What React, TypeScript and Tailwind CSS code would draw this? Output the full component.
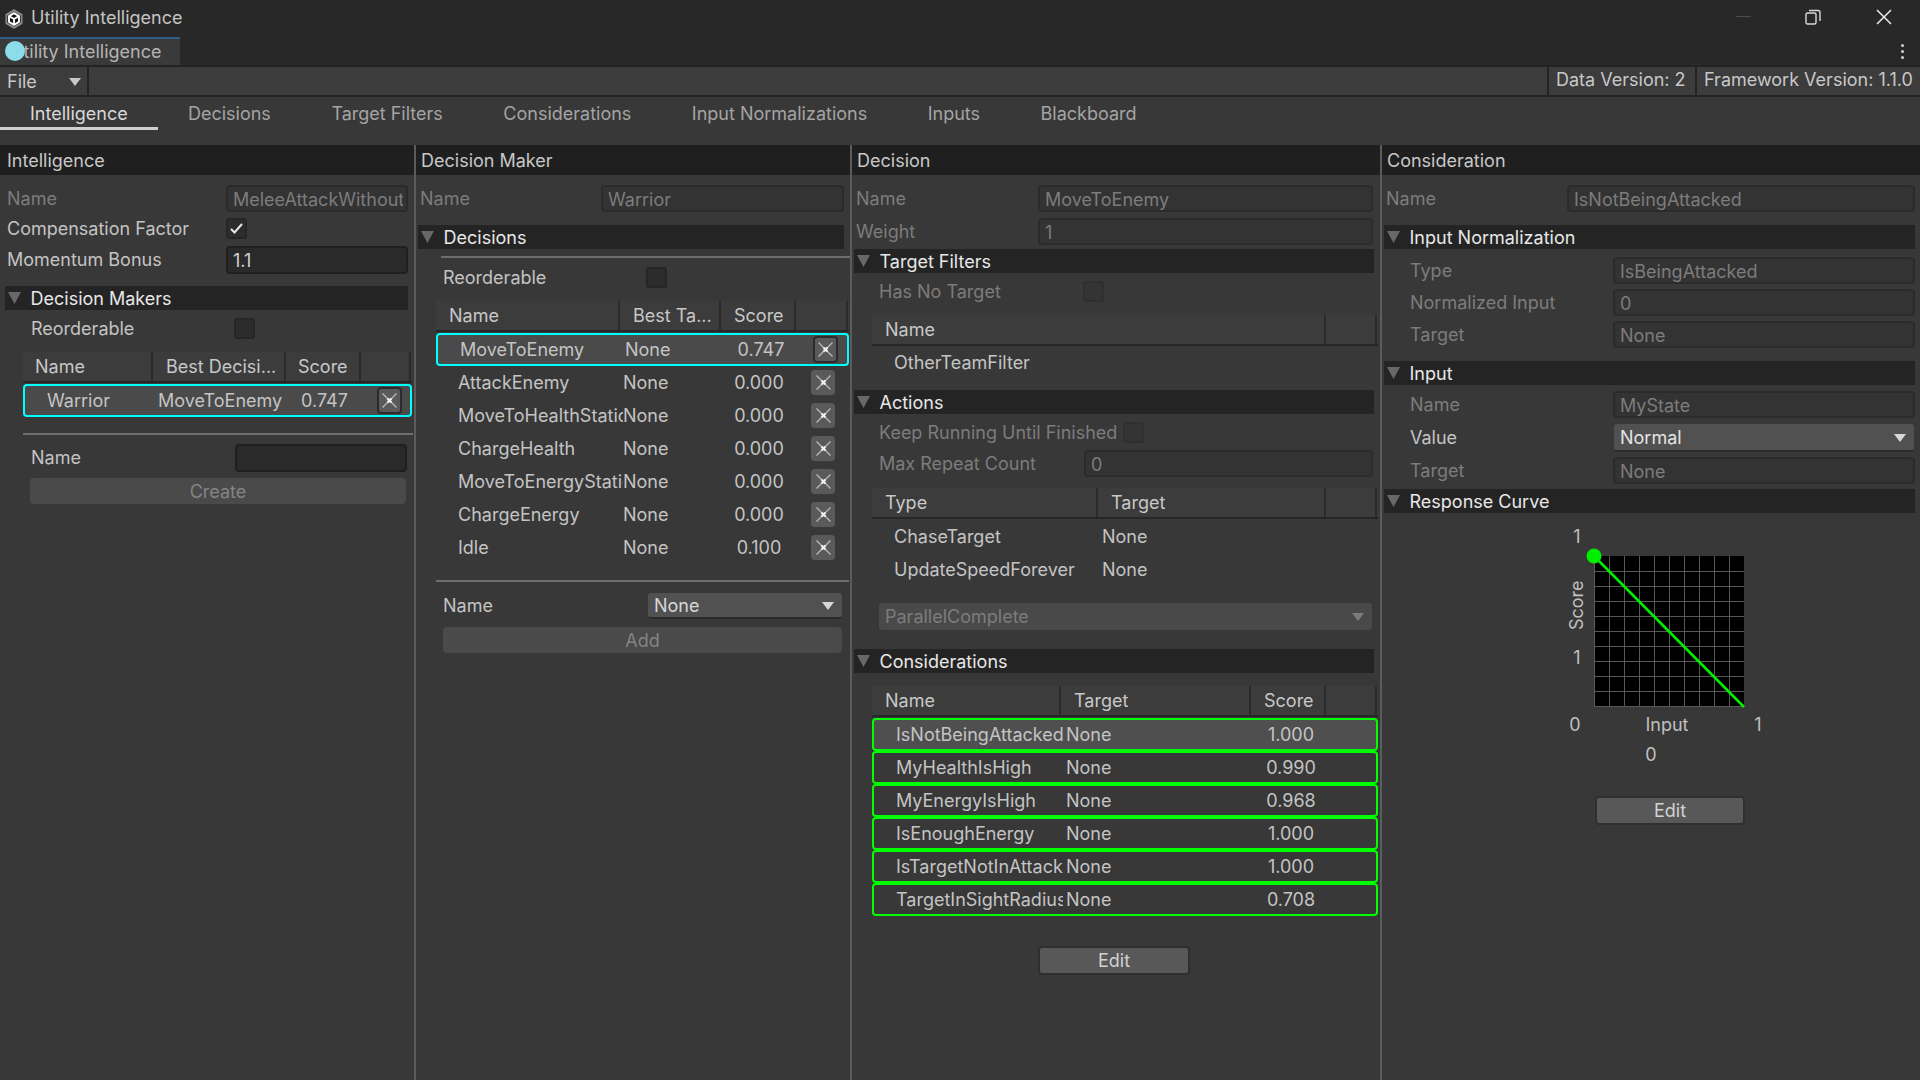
import type { ReactNode } from 'react';

const DECISIONS = [
  { name: 'AttackEnemy', score: '0.000' },
  { name: 'MoveToHealthStation', score: '0.000' },
  { name: 'ChargeHealth', score: '0.000' },
  { name: 'MoveToEnergyStation', score: '0.000' },
  { name: 'ChargeEnergy', score: '0.000' },
  { name: 'Idle', score: '0.100' },
];

const CONSIDERATIONS = [
  { name: 'IsNotBeingAttacked', score: '1.000' },
  { name: 'MyHealthIsHigh', score: '0.990' },
  { name: 'MyEnergyIsHigh', score: '0.968' },
  { name: 'IsEnoughEnergy', score: '1.000' },
  { name: 'IsTargetNotInAttackRange', score: '1.000' },
  { name: 'TargetInSightRadius', score: '0.708' },
];

const TABS = ['Decisions', 'Target Filters', 'Considerations', 'Input Normalizations', 'Inputs', 'Blackboard'];

function UnityLogo() {
  return (
    <svg width="20" height="20" viewBox="0 0 24 24" className="shrink-0">
      <path d="M12 1 L21.5 6.5 V17.5 L12 23 L2.5 17.5 V6.5 Z" fill="#8a8a8a" stroke="#8a8a8a" strokeWidth="1.5" strokeLinejoin="round" />
      <path d="M12 3 L20 7.7 V16.3 L12 21 L4 16.3 V7.7 Z" fill="#111" />
      <path d="M12 5 L18 8.5 V15.5 L12 19 L6 15.5 V8.5 Z M6 8.5 L12 12 L18 8.5 M12 12 V19" fill="none" stroke="#ffffff" strokeWidth="2.3" strokeLinejoin="round" />
    </svg>
  );
}

function Caret({ className = 'fill-[#c8c8c8]' }: { className?: string }) {
  return (
    <svg width="12" height="8" viewBox="0 0 12 8" className={className}>
      <path d="M0 0 H12 L6 8 Z" />
    </svg>
  );
}

function PanelHeader({ title, className }: { title: string; className: string }) {
  return <div className={`h-[30px] bg-[#1f1f1f] flex items-center pt-[1px] text-[#c8c8c8] ${className}`}>{title}</div>;
}

function Section({ title, className }: { title: string; className: string }) {
  return (
    <div className={`h-[24px] bg-[#242424] flex items-center text-[#e8e8e8] ${className}`}>
      <svg width="13" height="12" viewBox="0 0 13 12" className="ml-[3px] mr-[9.5px] shrink-0 fill-[#686868]">
        <path d="M0 0 H13 L6.5 12 Z" />
      </svg>
      <span className="pt-[1px]">{title}</span>
    </div>
  );
}

function Field({ value, active, className }: { value?: string; active?: boolean; className: string }) {
  const tone = active
    ? 'bg-[#2a2a2a] border-[#1f1f1f] text-[#d2d2d2]'
    : 'bg-[#333333] border-[#2b2b2b] text-[#7c7c7c]';
  return (
    <div className={`border-2 rounded-[4px] flex items-center pl-[5px] pr-[3px] ${tone} ${className}`}>
      <div className="w-full h-full flex items-center pt-[2px] overflow-hidden whitespace-nowrap">{value}</div>
    </div>
  );
}

function Check({ checked, dim }: { checked?: boolean; dim?: boolean }) {
  const tone = dim ? 'bg-[#343434] border-[#2f2f2f]' : 'bg-[#2c2c2c] border-[#262626]';
  return (
    <div className={`w-[21px] h-[21px] shrink-0 border-2 rounded-[3px] flex items-center justify-center ${tone}`}>
      {checked && (
        <svg width="13" height="11" viewBox="0 0 13 11" fill="none" stroke="#e8e8e8" strokeWidth="2">
          <path d="M1 6 L4.5 9.5 L12 1" />
        </svg>
      )}
    </div>
  );
}

function Label({ children, dim, className }: { children: ReactNode; dim?: boolean; className: string }) {
  return <div className={`shrink-0 whitespace-nowrap ${dim ? 'text-[#7c7c7c]' : 'text-[#c4c4c4]'} ${className}`}>{children}</div>;
}

function HeadCell({ children, className, pad = 'pl-[13px]' }: { children?: ReactNode; className: string; pad?: string }) {
  return <div className={`h-full shrink-0 flex items-center pt-[1px] border-r-2 border-[#2a2a2a] text-[#c8c8c8] ${pad} ${className}`}>{children}</div>;
}

function TableHead({ children, className }: { children: ReactNode; className: string }) {
  return <div className={`h-[31px] flex bg-[#3c3c3c] border-b-2 border-[#262626] ${className}`}>{children}</div>;
}

function XButton({ active, className }: { active?: boolean; className: string }) {
  return (
    <div className={`rounded-[4px] shrink-0 flex items-center justify-center bg-[#5a5a5a] ${active ? 'border-2 border-[#2b2b2b]' : 'border-b border-[#3a3a3a]'} ${className}`}>
      <svg width="15" height="15" viewBox="0 0 15 15" stroke="#bdbdbd" strokeWidth="1.2">
        <path d="M0.5 0.5 L14.5 14.5 M14.5 0.5 L0.5 14.5" />
        <path d="M5.5 5.5 L9.5 9.5 M9.5 5.5 L5.5 9.5" strokeWidth="2.2" stroke="#f0f0f0" />
      </svg>
    </div>
  );
}

function Button({ label, dim, className }: { label: string; dim?: boolean; className: string }) {
  const tone = dim
    ? 'bg-[#4a4a4a] text-[#848484]'
    : 'bg-[#585858] text-[#d2d2d2] border-2 border-[#2f2f2f]';
  return <div className={`rounded-[4px] flex items-center justify-center pt-[1px] ${tone} ${className}`}>{label}</div>;
}

function Cell({ children, className }: { children: ReactNode; className: string }) {
  return <div className={`shrink-0 overflow-hidden whitespace-nowrap text-[#c4c4c4] ${className}`}>{children}</div>;
}

function CurveChart() {
  const steps = [0, 1, 2, 3, 4, 5, 6, 7, 8, 9, 10];
  return (
    <svg width="150" height="151" viewBox="0 0 150 151" className="block overflow-visible">
      <rect width="150" height="151" fill="#000" />
      {steps.slice(0, 10).map((i) => (
        <line key={`v${i}`} x1={i * 15 + 0.5} x2={i * 15 + 0.5} y1="0" y2="151" stroke="#585858" />
      ))}
      {steps.slice(1).map((i) => (
        <line key={`h${i}`} x1="0" x2="150" y1={i * 15 + 0.5} y2={i * 15 + 0.5} stroke="#585858" />
      ))}
      <line x1="0" y1="0" x2="150" y2="151" stroke="#00ee00" strokeWidth="2.6" />
      <circle cx="0" cy="0" r="7.5" fill="#00ee00" />
    </svg>
  );
}

export default function App() {
  return (
    <div className="w-[1920px] h-[1080px] overflow-hidden flex flex-col bg-[#383838] text-[18px] leading-[24px] [font-family:Inter,sans-serif]">
      {/* window title */}
      <div className="h-[37px] shrink-0 bg-[#282828] flex items-center pl-[4px]">
        <UnityLogo />
        <span className="ml-[7px] mb-[1px] text-[#c4c4c4]">Utility Intelligence</span>
        <div className="ml-auto mb-[4px] flex items-center">
          <div className="w-[15px] h-px bg-[#4c4c4c] mr-[54px]" />
          <svg width="16" height="16" viewBox="0 0 16 16" fill="none" stroke="#d8d8d8" strokeWidth="1.4" className="mr-[55px]">
            <rect x="1" y="4" width="10" height="11" rx="1.5" />
            <path d="M4 1.5 H13 Q15 1.5 15 3.5 V12" />
          </svg>
          <svg width="16" height="16" viewBox="0 0 16 16" stroke="#ececec" strokeWidth="1.5" className="mr-[28px]">
            <path d="M1 1 L15 15 M15 1 L1 15" />
          </svg>
        </div>
      </div>

      {/* dock tab strip */}
      <div className="h-[28px] shrink-0 bg-[#282828] flex items-stretch">
        <div className="relative w-[180px] bg-[#3a3a3a] border-t-2 border-[#2f5c8a] flex items-center pl-[10px] text-[#b4b4b4]">
          Utility Intelligence
          <div className="absolute left-[5px] top-[2px] w-[20px] h-[20px] rounded-full bg-[#8cdcea]" />
        </div>
        <div className="ml-auto mr-[16px] flex flex-col justify-center gap-[3px]">
          <div className="w-[3px] h-[3px] bg-[#d4d4d4] rounded-full" />
          <div className="w-[3px] h-[3px] bg-[#d4d4d4] rounded-full" />
          <div className="w-[3px] h-[3px] bg-[#d4d4d4] rounded-full" />
        </div>
      </div>

      {/* toolbar */}
      <div className="h-[32px] shrink-0 bg-[#3c3c3c] border-y-2 border-[#232323] flex items-center text-[#c8c8c8]">
        <div className="w-[89px] h-full border-r-2 border-[#232323] flex items-center pl-[7px] pt-[1px]">
          File
          <Caret className="ml-auto mr-[6px] fill-[#c8c8c8]" />
        </div>
        <div className="ml-auto w-[148px] h-full border-l-2 border-[#232323] flex items-center pl-[7px] pb-[2px] whitespace-nowrap">Data Version: 2</div>
        <div className="w-[225px] h-full border-l-2 border-[#232323] flex items-center pl-[7px] pb-[2px] whitespace-nowrap">Framework Version: 1.1.0</div>
      </div>

      {/* tabs */}
      <div className="h-[48px] shrink-0 flex items-start">
        <div className="h-[33px] px-[30px] pt-[5px] text-[#d8d8d8] border-b-[3px] border-[#d0d0d0]">Intelligence</div>
        {TABS.map((tab) => (
          <div key={tab} className="h-[33px] px-[30.25px] pt-[5px] text-[#a4a4a4]">{tab}</div>
        ))}
      </div>

      <div className="flex-1 flex min-h-0">
        {/* Intelligence */}
        <div className="w-[416px] shrink-0 border-r-2 border-[#5c5c5c] flex flex-col">
          <PanelHeader title="Intelligence" className="pl-[7px]" />
          <div className="mt-[10px] h-[27px] flex items-center">
            <Label dim className="w-[226px] pl-[7px]">Name</Label>
            <Field value="MeleeAttackWithoutRange" className="w-[182px] h-[27px]" />
          </div>
          <div className="mt-[6px] h-[21px] flex items-center">
            <Label className="w-[226px] pl-[7px]">Compensation Factor</Label>
            <Check checked />
          </div>
          <div className="mt-[7px] h-[28px] flex items-center">
            <Label className="w-[226px] pl-[7px]">Momentum Bonus</Label>
            <Field active value="1.1" className="w-[182px] h-[28px]" />
          </div>
          <Section title="Decision Makers" className="mt-[12px] ml-[5px] w-[403px]" />
          <div className="mt-[8px] h-[21px] flex items-center">
            <Label className="w-[234px] pl-[31px]">Reorderable</Label>
            <Check />
          </div>
          <TableHead className="mt-[13px] ml-[23px] w-[389px]">
            <HeadCell pad="pl-[12px]" className="w-[130px]">Name</HeadCell>
            <HeadCell pad="pl-[13px]" className="w-[133px]">Best Decisi...</HeadCell>
            <HeadCell pad="pl-[12px]" className="w-[75px]">Score</HeadCell>
            <HeadCell className="w-[50px]" />
          </TableHead>
          <div className="mt-[1px] ml-[23px] w-[389px] h-[33px] border-2 border-[#00ffff] rounded-[4px] bg-[#4a4a4a] flex items-center">
            <Cell className="w-[133px] pl-[22px]">Warrior</Cell>
            <Cell className="w-[127px]">MoveToEnemy</Cell>
            <Cell className="w-[79px] text-center">0.747</Cell>
            <XButton active className="ml-[13px] w-[25px] h-[27px]" />
          </div>
          <div className="mt-[16px] ml-[23px] w-[390px] h-[2px] bg-[#6e6e6e]" />
          <div className="mt-[9px] h-[28px] flex items-center">
            <Label className="w-[235px] pl-[31px]">Name</Label>
            <Field active className="w-[172px] h-[28px]" />
          </div>
          <Button dim label="Create" className="mt-[6px] ml-[30px] w-[376px] h-[26px]" />
        </div>

        {/* Decision Maker */}
        <div className="w-[436px] shrink-0 border-r-2 border-[#5c5c5c] flex flex-col">
          <PanelHeader title="Decision Maker" className="pl-[5px]" />
          <div className="mt-[10px] h-[27px] flex items-center">
            <Label dim className="w-[185px] pl-[4px]">Name</Label>
            <Field value="Warrior" className="w-[243px] h-[27px]" />
          </div>
          <Section title="Decisions" className="mt-[13px] ml-[2px] w-[426px]" />
          <div className="mt-[7px] ml-[25px] h-[2px] bg-[#6e6e6e]" />
          <div className="mt-[9px] h-[21px] flex items-center">
            <Label className="w-[230px] pl-[27px]">Reorderable</Label>
            <Check />
          </div>
          <TableHead className="mt-[13px] ml-[20px] w-[413px]">
            <HeadCell className="w-[184px]">Name</HeadCell>
            <HeadCell className="w-[101px]">Best Ta...</HeadCell>
            <HeadCell className="w-[75px]">Score</HeadCell>
            <HeadCell className="w-[52px]" />
          </TableHead>
          <div className="mt-[1px] ml-[20px] w-[413px] h-[33px] border-2 border-[#00ffff] rounded-[4px] bg-[#4a4a4a] flex items-center">
            <Cell className="w-[187px] pl-[22px]">MoveToEnemy</Cell>
            <Cell className="w-[96px]">None</Cell>
            <Cell className="w-[80px] text-center">0.747</Cell>
            <XButton active className="ml-[12px] w-[25px] h-[27px]" />
          </div>
          {DECISIONS.map((row) => (
            <div key={row.name} className="ml-[22px] w-[411px] h-[33px] flex items-center">
              <Cell className="w-[185px] pl-[20px]">{row.name}</Cell>
              <Cell className="w-[97px]">None</Cell>
              <Cell className="w-[78px] text-center">{row.score}</Cell>
              <XButton className="ml-[13px] w-[24px] h-[26px]" />
            </div>
          ))}
          <div className="mt-[16px] ml-[20px] w-[413px] h-[2px] bg-[#6e6e6e]" />
          <div className="mt-[11px] h-[26px] flex items-center">
            <Label className="w-[232px] pl-[27px]">Name</Label>
            <div className="w-[194px] h-[26px] rounded-[3px] bg-[#515151] border-b-2 border-[#2b2b2b] flex items-center pl-[6px] pt-[1px] text-[#d8d8d8]">
              None
              <Caret className="ml-auto mr-[8px] fill-[#d8d8d8]" />
            </div>
          </div>
          <Button dim label="Add" className="mt-[8px] ml-[27px] w-[399px] h-[26px]" />
        </div>

        {/* Decision */}
        <div className="w-[530px] shrink-0 border-r-2 border-[#5c5c5c] flex flex-col">
          <PanelHeader title="Decision" className="pl-[5px]" />
          <div className="mt-[10px] h-[27px] flex items-center">
            <Label dim className="w-[186px] pl-[4px]">Name</Label>
            <Field value="MoveToEnemy" className="w-[335px] h-[27px]" />
          </div>
          <div className="mt-[6px] h-[27px] flex items-center">
            <Label dim className="w-[186px] pl-[4px]">Weight</Label>
            <Field value="1" className="w-[335px] h-[27px]" />
          </div>
          <Section title="Target Filters" className="mt-[4px] ml-[2px] w-[520px]" />
          <div className="mt-[8px] h-[21px] flex items-center">
            <Label dim className="w-[231px] pl-[27px]">Has No Target</Label>
            <Check dim />
          </div>
          <TableHead className="mt-[13px] ml-[20px] w-[506px]">
            <HeadCell className="w-[454px]">Name</HeadCell>
            <HeadCell className="w-[51px]" />
          </TableHead>
          <div className="h-[33px] ml-[42px] pt-[1px] flex items-center">
            <Cell className="w-[208px]">OtherTeamFilter</Cell>
          </div>
          <Section title="Actions" className="mt-[11px] ml-[2px] w-[520px]" />
          <div className="mt-[8px] h-[21px] flex items-center">
            <Label dim className="w-[271px] pl-[27px]">Keep Running Until Finished</Label>
            <Check dim />
          </div>
          <div className="mt-[7px] h-[27px] flex items-center">
            <Label dim className="w-[232px] pl-[27px]">Max Repeat Count</Label>
            <Field value="0" className="w-[289px] h-[27px]" />
          </div>
          <TableHead className="mt-[11px] ml-[20px] w-[506px]">
            <HeadCell className="w-[226px]">Type</HeadCell>
            <HeadCell className="w-[228px]">Target</HeadCell>
            <HeadCell className="w-[51px]" />
          </TableHead>
          <div className="mt-[1px] h-[33px] ml-[42px] flex items-center">
            <Cell className="w-[208px]">ChaseTarget</Cell>
            <Cell className="w-[100px]">None</Cell>
          </div>
          <div className="h-[33px] ml-[42px] flex items-center">
            <Cell className="w-[208px]">UpdateSpeedForever</Cell>
            <Cell className="w-[100px]">None</Cell>
          </div>
          <div className="mt-[17px] ml-[27px] w-[493px] h-[27px] rounded-[3px] bg-[#494949] flex items-center pl-[6px] pt-[1px] text-[#7c7c7c]">
            ParallelComplete
            <Caret className="ml-auto mr-[8px] fill-[#7c7c7c]" />
          </div>
          <Section title="Considerations" className="mt-[19px] ml-[2px] w-[520px]" />
          <TableHead className="mt-[13px] ml-[20px] w-[506px]">
            <HeadCell className="w-[189px]">Name</HeadCell>
            <HeadCell className="w-[190px]">Target</HeadCell>
            <HeadCell className="w-[75px]">Score</HeadCell>
            <HeadCell className="w-[51px]" />
          </TableHead>
          <div className="mt-[1px]">
            {CONSIDERATIONS.map((row, i) => (
              <div
                key={row.name}
                className={`ml-[20px] w-[506px] h-[33px] border-2 border-[#00ff00] rounded-[4px] flex items-center ${i === 0 ? 'bg-[#4f4f4f]' : ''}`}
              >
                <Cell className="w-[189px] pl-[22px]">{row.name}</Cell>
                <Cell className="ml-[3px] w-[185px]">None</Cell>
                <Cell className="w-[80px] text-center">{row.score}</Cell>
              </div>
            ))}
          </div>
          <Button label="Edit" className="mt-[30px] ml-[186px] w-[152px] h-[29px]" />
        </div>

        {/* Consideration */}
        <div className="flex-1 flex flex-col min-w-0">
          <PanelHeader title="Consideration" className="pl-[5px]" />
          <div className="mt-[10px] h-[27px] flex items-center">
            <Label dim className="w-[185px] pl-[4px]">Name</Label>
            <Field value="IsNotBeingAttacked" className="w-[348px] h-[27px]" />
          </div>
          <Section title="Input Normalization" className="mt-[13px] ml-[2px] w-[531px]" />
          <div className="mt-[8px] h-[27px] flex items-center">
            <Label dim className="w-[231px] pl-[28px]">Type</Label>
            <Field value="IsBeingAttacked" className="w-[302px] h-[27px]" />
          </div>
          <div className="mt-[5px] h-[27px] flex items-center">
            <Label dim className="w-[231px] pl-[28px]">Normalized Input</Label>
            <Field value="0" className="w-[302px] h-[27px]" />
          </div>
          <div className="mt-[5px] h-[27px] flex items-center">
            <Label dim className="w-[231px] pl-[28px]">Target</Label>
            <Field value="None" className="w-[302px] h-[27px]" />
          </div>
          <Section title="Input" className="mt-[13px] ml-[2px] w-[531px]" />
          <div className="mt-[6px] h-[27px] flex items-center">
            <Label dim className="w-[231px] pl-[28px]">Name</Label>
            <Field value="MyState" className="w-[302px] h-[27px]" />
          </div>
          <div className="mt-[6px] h-[28px] flex items-center">
            <Label className="w-[232px] pl-[28px]">Value</Label>
            <div className="w-[300px] h-[28px] rounded-[3px] bg-[#515151] border-b-2 border-[#2b2b2b] flex items-center pl-[6px] pt-[1px] text-[#e4e4e4]">
              Normal
              <Caret className="ml-auto mr-[8px] fill-[#d8d8d8]" />
            </div>
          </div>
          <div className="mt-[5px] h-[27px] flex items-center">
            <Label dim className="w-[231px] pl-[28px]">Target</Label>
            <Field value="None" className="w-[302px] h-[27px]" />
          </div>
          <Section title="Response Curve" className="mt-[5px] ml-[2px] w-[531px]" />

          <div className="mt-[12px] ml-[183px] w-[210px] text-[#c0c0c0]">
            <div className="flex items-start">
              <div className="w-[24px] flex flex-col items-center">
                <span>1</span>
                <span className="mt-[32px] h-[48px] [writing-mode:vertical-rl] rotate-180 flex items-center justify-center">Score</span>
                <span className="mt-[17px]">1</span>
              </div>
              <div className="mt-[31px] ml-[5px]">
                <CurveChart />
              </div>
            </div>
            <div className="mt-[6px] flex">
              <span className="w-[20px] text-center">0</span>
              <span className="ml-[52px] w-[60px] text-center">Input</span>
              <span className="ml-[51px] w-[20px] text-center">1</span>
            </div>
            <div className="mt-[6px] ml-[76px] w-[20px] text-center">0</div>
            <Button label="Edit" className="mt-[29px] ml-[30px] w-[150px] h-[29px]" />
          </div>
        </div>
      </div>
    </div>
  );
}
